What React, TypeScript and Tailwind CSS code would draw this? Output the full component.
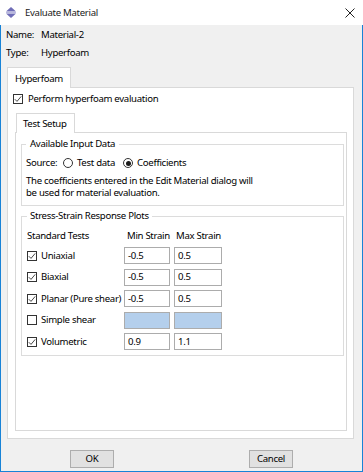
import React from 'react';

const Check = ({ checked }: { checked: boolean }) => (
  <span className="w-[10px] h-[10px] border border-[#333333] bg-white flex items-center justify-center shrink-0">
    {checked && (
      <svg width="8" height="8" viewBox="0 0 8 8">
        <path d="M0.8 4.2 L3 6.4 L7.2 1.4" stroke="#333333" strokeWidth="0.9" fill="none" />
      </svg>
    )}
  </span>
);

const Radio = ({ on }: { on: boolean }) => (
  <span className="w-[10px] h-[10px] rounded-full border border-[#333333] bg-white flex items-center justify-center shrink-0">
    {on && <span className="w-[5px] h-[5px] rounded-full bg-[#1a1a1a]" />}
  </span>
);

const Field = ({ value, disabled, wide }: { value?: string; disabled?: boolean; wide?: boolean }) => (
  <div
    className={`h-[17px] border border-[#acacac] pl-[3px] flex items-center ${wide ? 'w-[48px]' : 'w-[46px]'} ${disabled ? 'bg-[#b4cfec]' : 'bg-white'}`}
  >
    {value}
  </div>
);

const App = () => {
  // rows of the stress-strain table
  const tests = [
    { name: 'Uniaxial', on: true, min: '-0.5', max: '0.5' },
    { name: 'Biaxial', on: true, min: '-0.5', max: '0.5' },
    { name: 'Planar (Pure shear)', on: true, min: '-0.5', max: '0.5' },
    { name: 'Simple shear', on: false, min: '', max: '' },
    { name: 'Volumetric', on: true, min: '0.9', max: '1.1' },
  ];

  return (
    <div className="w-[363px] h-[472px] flex flex-col font-['Noto_Sans',sans-serif] text-[9.6px] tracking-[-0.3px] text-black leading-none">
      {/* Title bar */}
      <div className="h-[25px] bg-white flex items-center shrink-0">
        <svg className="ml-[6px]" width="10" height="11" viewBox="0 0 10 11">
          <polygon points="5,0 10,4.5 0,4.5" fill="#6f6db7" />
          <rect x="0" y="5" width="10" height="1" fill="#b9b8de" />
          <polygon points="0,6.5 10,6.5 5,11" fill="#6f6db7" />
        </svg>
        <span className="ml-[9px] text-[#1a1a1a]">Evaluate Material</span>
        <svg className="ml-auto mr-[8px]" width="10" height="10" viewBox="0 0 10 10">
          <path d="M0.5 0.5 L9.5 9.5 M9.5 0.5 L0.5 9.5" stroke="#222222" strokeWidth="1" />
        </svg>
      </div>

      {/* Body */}
      <div className="flex-1 bg-[#f0f0f0] border-x border-b border-[#1883d7] flex flex-col">
        <div className="pt-[1px] pl-[5px]">
          <div className="flex h-[18px] items-center">
            <span className="w-[35px]">Name:</span>
            <span>Material-2</span>
          </div>
          <div className="flex h-[18px] items-center">
            <span className="w-[35px]">Type:</span>
            <span>Hyperfoam</span>
          </div>
        </div>

        <div className="mt-[5px] ml-[6px] w-[347px]">
          <div className="flex">
            <div className="relative z-10 -mb-px h-[21px] w-[64px] bg-white border border-b-0 border-[#d9d9d9] pl-[7px] pt-[2px] flex items-center">
              Hyperfoam
            </div>
          </div>
          <div className="h-[352px] bg-white border border-[#d9d9d9] flex flex-col">
            <div className="mt-[4px] ml-[5px] h-[14px] flex items-center gap-[5px]">
              <Check checked />
              <span>Perform hyperfoam evaluation</span>
            </div>

            <div className="mt-[7px] ml-[8px] flex">
              <div className="relative z-10 -mb-px h-[20px] w-[59px] bg-white border border-b-0 border-[#d9d9d9] pl-[6px] flex items-center">
                Test Setup
              </div>
            </div>
            <div className="ml-[7px] w-[332px] h-[299px] border border-[#d9d9d9] flex flex-col">
              {/* Available Input Data */}
              <fieldset className="ml-[5px] mt-[5px] w-[323px] border border-[#dcdcdc] px-[4px] pt-[6px] pb-[6px]">
                <legend className="px-[4px] h-[12px] leading-[12px]">Available Input Data</legend>
                <div className="h-[14px] flex items-center">
                  <span className="w-[37px]">Source:</span>
                  <Radio on={false} />
                  <span className="ml-[4px]">Test data</span>
                  <span className="ml-[8px]"><Radio on /></span>
                  <span className="ml-[4px]">Coefficients</span>
                </div>
                <p className="mt-[5px] leading-[12px]">
                  The coefficients entered in the Edit Material dialog will
                  <br />
                  be used for material evaluation.
                </p>
              </fieldset>

              {/* Stress-Strain Response Plots */}
              <fieldset className="ml-[5px] mt-[4px] w-[323px] border border-[#dcdcdc] pl-[5px] pt-[7px] pb-[5px]">
                <legend className="px-[3px] h-[12px] leading-[12px]">Stress-Strain Response Plots</legend>
                <div className="h-[14px] flex items-center">
                  <span className="w-[97px]">Standard Tests</span>
                  <span className="w-[50px] pl-[3px]">Min Strain</span>
                  <span className="pl-[2px]">Max Strain</span>
                </div>
                <div className="mt-[4px] flex flex-col gap-[4.5px]">
                  {tests.map(t => (
                    <div key={t.name} className="h-[17px] flex items-center">
                      <div className="w-[97px] flex items-center gap-[4px]">
                        <Check checked={t.on} />
                        <span>{t.name}</span>
                      </div>
                      <Field value={t.min} disabled={!t.on} />
                      <div className="w-[4px]" />
                      <Field value={t.max} disabled={!t.on} wide />
                    </div>
                  ))}
                </div>
              </fieldset>
            </div>
          </div>
        </div>

        {/* Buttons */}
        <div className="mt-[11px] flex justify-center gap-[135px]">
          <button className="w-[44px] h-[18px] bg-[#e1e1e1] border border-[#adadad] flex items-center justify-center">OK</button>
          <button className="w-[44px] h-[18px] bg-[#e1e1e1] border border-[#adadad] flex items-center justify-center">Cancel</button>
        </div>
      </div>
    </div>
  );
};

export default App;
